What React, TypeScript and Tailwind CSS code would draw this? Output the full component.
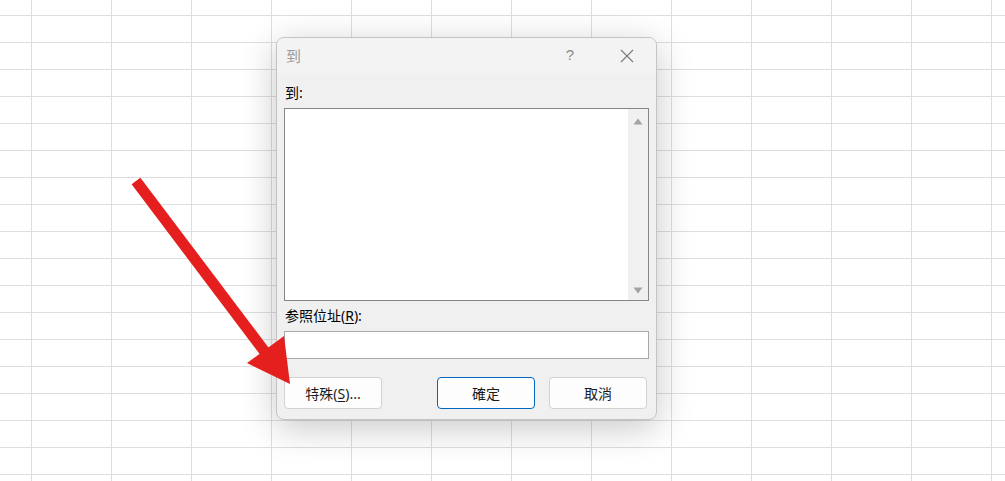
import React from "react";

function UpTri() {
  return (
    <svg width="10" height="7" viewBox="0 0 10 7">
      <polygon points="5,0.5 9.5,6.5 0.5,6.5" fill="#a3a3a3" />
    </svg>
  );
}
function DownTri() {
  return (
    <svg width="10" height="7" viewBox="0 0 10 7">
      <polygon points="0.5,0.5 9.5,0.5 5,6.5" fill="#a3a3a3" />
    </svg>
  );
}

export default function App() {
  return (
    <div className="relative w-[1005px] h-[481px] overflow-hidden bg-white bg-[linear-gradient(to_right,#dedede_1px,transparent_1px),linear-gradient(to_bottom,#dedede_1px,transparent_1px)] bg-size-[80px_27px] bg-position-[31px_15px] font-['Noto_Sans','Noto_Sans_CJK_TC',sans-serif]">
      {/* Dialog window */}
      <div className="absolute left-[276px] top-[37px] w-[381px] h-[383px] rounded-[8px] border border-[#c4c4c4] bg-[#f0f0f0] shadow-[0_8px_36px_rgba(0,0,0,0.22)] flex flex-col overflow-hidden">
        {/* Title bar */}
        <div className="h-[35px] bg-[#f3f3f3] flex items-center shrink-0">
          <span className="pl-[9px] text-[15px] leading-none text-[#9a9a9a] font-['Noto_Sans_CJK_TC',sans-serif]">到</span>
          <div className="ml-auto flex items-center mr-[6px]">
            <div className="w-[46px] h-[35px] flex items-center justify-center text-[15px] text-[#8a8a8a] font-['Liberation_Sans',sans-serif]">?</div>
            <div className="ml-[11px] w-[46px] h-[35px] flex items-center justify-center">
              <svg width="14" height="14" viewBox="0 0 14 14">
                <path d="M1 1 L13 13 M13 1 L1 13" stroke="#7a7a7a" strokeWidth="1.1" fill="none" />
              </svg>
            </div>
          </div>
        </div>
        {/* Body */}
        <div className="flex flex-col px-[7px] pt-[10px] text-[14px] text-black">
          <div className="h-[20px] leading-[20px] pl-[1px]">到:</div>
          <div className="mt-[5px] h-[193px] w-[365px] border border-[#868686] bg-white flex justify-end">
            <div className="w-[20px] h-full bg-[#f0f0f0] flex flex-col items-center justify-between pt-[9px] pb-[6px]">
              <UpTri />
              <DownTri />
            </div>
          </div>
          <div className="mt-[5px] h-[20px] leading-[20px] pl-[1px]">
            参照位址(<span className="underline underline-offset-2">R</span>):
          </div>
          <div className="mt-[5px] h-[28px] w-[365px] border border-[#a8a8a8] bg-white" />
          <div className="mt-[18px] flex items-center">
            <button className="w-[98px] h-[32px] rounded-[4px] border border-[#d2d2d2] bg-[#fdfdfd] text-[14px] text-[#1b1b1b]">
              特殊(<span className="underline underline-offset-2">S</span>)...
            </button>
            <div className="ml-auto mr-[2px] flex gap-[14px]">
              <button className="w-[98px] h-[32px] rounded-[4px] border border-[#0067c0] bg-[#fdfdfd] text-[14px] text-[#1b1b1b]">
                確定
              </button>
              <button className="w-[98px] h-[32px] rounded-[4px] border border-[#d2d2d2] bg-[#fdfdfd] text-[14px] text-[#1b1b1b]">
                取消
              </button>
            </div>
          </div>
        </div>
      </div>
      {/* Red arrow annotation */}
      <svg className="absolute left-0 top-0 pointer-events-none" width="1005" height="481" viewBox="0 0 1005 481">
        <line x1="136" y1="181" x2="268" y2="356" stroke="#e51e1e" strokeWidth="11" strokeLinecap="butt" />
        <polygon points="247,363 284,336 290,384" fill="#e51e1e" />
      </svg>
    </div>
  );
}
